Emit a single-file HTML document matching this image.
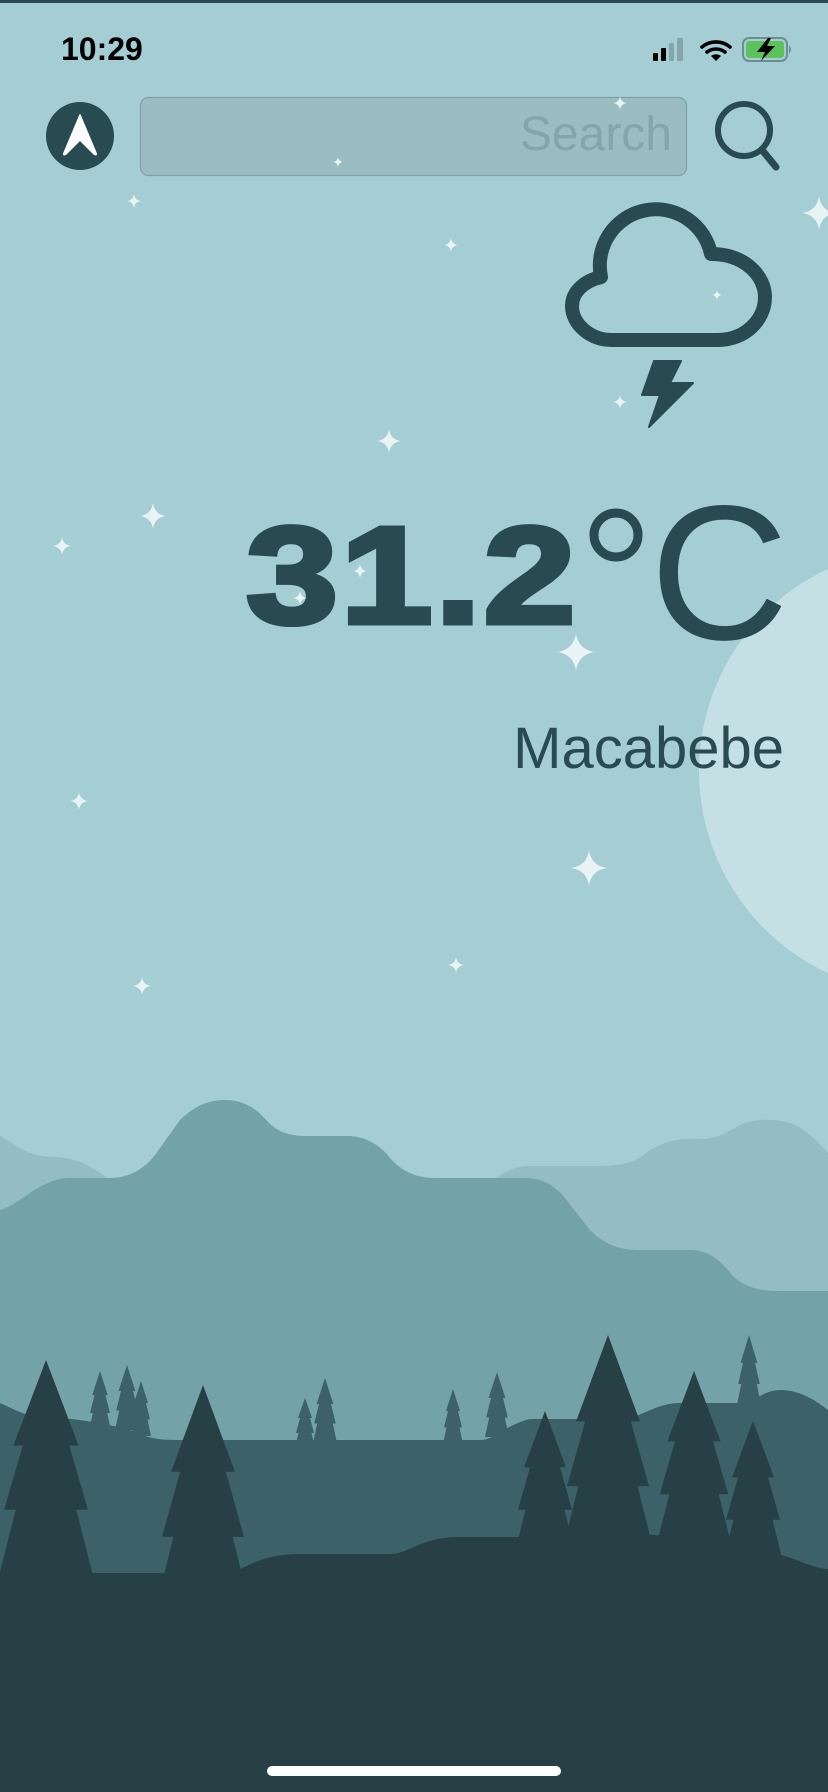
<!DOCTYPE html>
<html><head><meta charset="utf-8"><style>
html,body{margin:0;padding:0}
body{width:828px;height:1792px;position:relative;overflow:hidden;background:#a5cdd4;font-family:"Liberation Sans",sans-serif}
svg{position:absolute;left:0;top:0}
.t{position:absolute;white-space:nowrap;line-height:1}
</style></head><body>
<svg width="828" height="1792" viewBox="0 0 828 1792">
<rect x="0" y="0" width="828" height="3" fill="#2c4c54"/>
<circle cx="922" cy="771" r="223" fill="#c4e0e5"/>
<g fill="#e8f3f4">
<path transform="translate(589,868) scale(1.8)" d="M0,-10 Q1.2,-1.2 10,0 Q1.2,1.2 0,10 Q-1.2,1.2 -10,0 Q-1.2,-1.2 0,-10Z"/>
<path transform="translate(819,213) scale(1.7)" d="M0,-10 Q1.2,-1.2 10,0 Q1.2,1.2 0,10 Q-1.2,1.2 -10,0 Q-1.2,-1.2 0,-10Z"/>
<path transform="translate(153,516) scale(1.3)" d="M0,-10 Q1.2,-1.2 10,0 Q1.2,1.2 0,10 Q-1.2,1.2 -10,0 Q-1.2,-1.2 0,-10Z"/>
<path transform="translate(389,441) scale(1.2)" d="M0,-10 Q1.2,-1.2 10,0 Q1.2,1.2 0,10 Q-1.2,1.2 -10,0 Q-1.2,-1.2 0,-10Z"/>
<path transform="translate(62,546) scale(0.9)" d="M0,-10 Q1.2,-1.2 10,0 Q1.2,1.2 0,10 Q-1.2,1.2 -10,0 Q-1.2,-1.2 0,-10Z"/>
<path transform="translate(79,801) scale(0.9)" d="M0,-10 Q1.2,-1.2 10,0 Q1.2,1.2 0,10 Q-1.2,1.2 -10,0 Q-1.2,-1.2 0,-10Z"/>
<path transform="translate(142,986) scale(0.9)" d="M0,-10 Q1.2,-1.2 10,0 Q1.2,1.2 0,10 Q-1.2,1.2 -10,0 Q-1.2,-1.2 0,-10Z"/>
<path transform="translate(456,965) scale(0.8)" d="M0,-10 Q1.2,-1.2 10,0 Q1.2,1.2 0,10 Q-1.2,1.2 -10,0 Q-1.2,-1.2 0,-10Z"/>
<path transform="translate(134,201) scale(0.7)" d="M0,-10 Q1.2,-1.2 10,0 Q1.2,1.2 0,10 Q-1.2,1.2 -10,0 Q-1.2,-1.2 0,-10Z"/>
<path transform="translate(451,245) scale(0.7)" d="M0,-10 Q1.2,-1.2 10,0 Q1.2,1.2 0,10 Q-1.2,1.2 -10,0 Q-1.2,-1.2 0,-10Z"/>
</g>
<g fill="#93bdc3">
<path d="M0,1135 C20,1150 35,1157 53,1157 C75,1157 90,1165 110,1180 L110,1300 L0,1300Z"/>
<path d="M490,1185 C500,1172 515,1166 530,1166 L600,1166 C625,1166 640,1160 650,1150 C665,1142 675,1139 690,1139 L700,1139 C720,1139 730,1130 740,1125 C755,1118 780,1118 795,1125 C810,1132 820,1145 828,1153 L828,1300 L490,1300Z"/>
</g>
<path fill="#73a3a9" d="M0,1210 C20,1205 40,1178 70,1178 L110,1178 C130,1178 145,1168 155,1155 L180,1120 C195,1105 210,1100 225,1100 C245,1100 258,1110 268,1122 C278,1132 290,1136 306,1136 L348,1136 C365,1136 380,1145 390,1158 C402,1172 418,1178 435,1178 L525,1178 C545,1178 558,1188 568,1202 L590,1230 C605,1245 620,1250 640,1250 L690,1250 C710,1250 722,1262 732,1275 C745,1288 760,1291 781,1291 L828,1291 L828,1792 L0,1792Z"/>
<g fill="#3c6168">
<path transform="translate(100,1371) scale(0.55,0.6)" d="M0,0 L14,40 L10,40 L18,70 L13,70 L20,100 L-20,100 L-13,70 L-18,70 L-10,40 L-14,40Z"/>
<path transform="translate(127,1365) scale(0.6,0.65)" d="M0,0 L14,40 L10,40 L18,70 L13,70 L20,100 L-20,100 L-13,70 L-18,70 L-10,40 L-14,40Z"/>
<path transform="translate(141,1381) scale(0.5,0.55)" d="M0,0 L14,40 L10,40 L18,70 L13,70 L20,100 L-20,100 L-13,70 L-18,70 L-10,40 L-14,40Z"/>
<path transform="translate(305,1398) scale(0.5,0.5)" d="M0,0 L14,40 L10,40 L18,70 L13,70 L20,100 L-20,100 L-13,70 L-18,70 L-10,40 L-14,40Z"/>
<path transform="translate(325,1378) scale(0.6,0.65)" d="M0,0 L14,40 L10,40 L18,70 L13,70 L20,100 L-20,100 L-13,70 L-18,70 L-10,40 L-14,40Z"/>
<path transform="translate(453,1389) scale(0.5,0.55)" d="M0,0 L14,40 L10,40 L18,70 L13,70 L20,100 L-20,100 L-13,70 L-18,70 L-10,40 L-14,40Z"/>
<path transform="translate(497,1372) scale(0.6,0.65)" d="M0,0 L14,40 L10,40 L18,70 L13,70 L20,100 L-20,100 L-13,70 L-18,70 L-10,40 L-14,40Z"/>
<path transform="translate(749,1335) scale(0.6,0.7)" d="M0,0 L14,40 L10,40 L18,70 L13,70 L20,100 L-20,100 L-13,70 L-18,70 L-10,40 L-14,40Z"/>
<path d="M0,1403 C20,1412 30,1418 50,1418 C80,1418 110,1425 130,1430 C145,1438 160,1440 175,1440 L480,1440 C495,1440 505,1425 530,1419 L620,1419 C640,1419 655,1403 680,1403 L750,1403 C760,1395 770,1390 780,1390 C800,1390 815,1400 828,1410 L828,1792 L0,1792Z"/>
</g>
<g fill="#274046">
<path transform="translate(46,1360) scale(2.33,2.14)" d="M0,0 L14,40 L10,40 L18,70 L13,70 L20,100 L-20,100 L-13,70 L-18,70 L-10,40 L-14,40Z"/>
<path transform="translate(203,1385) scale(2.28,2.17)" d="M0,0 L14,40 L10,40 L18,70 L13,70 L20,100 L-20,100 L-13,70 L-18,70 L-10,40 L-14,40Z"/>
<path transform="translate(545,1411) scale(1.5,1.41)" d="M0,0 L14,40 L10,40 L18,70 L13,70 L20,100 L-20,100 L-13,70 L-18,70 L-10,40 L-14,40Z"/>
<path transform="translate(608,1335) scale(2.28,2.16)" d="M0,0 L14,40 L10,40 L18,70 L13,70 L20,100 L-20,100 L-13,70 L-18,70 L-10,40 L-14,40Z"/>
<path transform="translate(694,1371) scale(1.9,1.76)" d="M0,0 L14,40 L10,40 L18,70 L13,70 L20,100 L-20,100 L-13,70 L-18,70 L-10,40 L-14,40Z"/>
<path transform="translate(753,1421) scale(1.5,1.41)" d="M0,0 L14,40 L10,40 L18,70 L13,70 L20,100 L-20,100 L-13,70 L-18,70 L-10,40 L-14,40Z"/>
<path d="M0,1573 L232,1573 C250,1565 265,1554 300,1554 L390,1554 C410,1554 420,1537 460,1537 L520,1537 C540,1537 560,1525 590,1528 L700,1540 C730,1545 760,1553 781,1555 C800,1560 815,1569 828,1569 L828,1792 L0,1792Z"/>
</g>
<rect x="267" y="1766" width="294" height="10" rx="5" fill="#fff"/>
<g fill="#000">
<rect x="653" y="53" width="5" height="8" rx="1"/>
<rect x="661" y="48" width="5" height="13" rx="1"/>
</g>
<g fill="#86a5a9">
<rect x="669" y="43" width="5" height="18" rx="1"/>
<rect x="677" y="38" width="6" height="23" rx="1"/>
</g>
<g fill="none" stroke="#000" stroke-width="3.6" stroke-linecap="round">
<path d="M702,47 A22,22 0 0 1 730,47"/>
<path d="M707,52 A15,15 0 0 1 725,52"/>
</g>
<path d="M711,56 A8,8 0 0 1 721,56 L716,61Z" fill="#000"/>
<rect x="743" y="38" width="44" height="23" rx="6" fill="none" stroke="#6f8d91" stroke-width="2"/>
<rect x="746" y="41" width="38" height="17" rx="3.5" fill="#5cc35c"/>
<path d="M789,45 Q793,49.5 789,54Z" fill="#6f8d91"/>
<path d="M768,38 L757,52 L765,52 L761,61 L775,46 L767,46 L771,38Z" fill="#000"/>
<circle cx="80" cy="136" r="34" fill="#284a51"/>
<path d="M80,115 L96,153 Q97,156 94,154 L80,140 L66,154 Q63,156 64,153Z" fill="#fff" stroke="#fff" stroke-width="1.5" stroke-linejoin="round"/>
<rect x="140.5" y="97.5" width="546" height="78" rx="8" fill="#9bbcc1" stroke="#7fa1a6" stroke-width="1.2"/>
<g fill="#e8f3f4">
<path transform="translate(620,103) scale(0.7)" d="M0,-10 Q1.2,-1.2 10,0 Q1.2,1.2 0,10 Q-1.2,1.2 -10,0 Q-1.2,-1.2 0,-10Z"/>
<path transform="translate(338,162) scale(0.5)" d="M0,-10 Q1.2,-1.2 10,0 Q1.2,1.2 0,10 Q-1.2,1.2 -10,0 Q-1.2,-1.2 0,-10Z"/>
</g>
<circle cx="744" cy="130" r="26" fill="none" stroke="#2a4a52" stroke-width="6"/>
<line x1="762" y1="150" x2="776" y2="167" stroke="#2a4a52" stroke-width="7" stroke-linecap="round"/>
<path d="M612,340 C590,340 572,324 572,306 C572,292 584,281 601,277 A56,56 0 0 1 711,254 C745,254 765,276 765,297 C765,320 745,340 718,340 Z" fill="none" stroke="#2a4a52" stroke-width="14" stroke-linejoin="round"/>
<polygon points="654,361 681,361 670,383 693,383 649,427 660,395 642,395" fill="#2a4a52" stroke="#2a4a52" stroke-width="2" stroke-linejoin="round"/>
<g fill="#e8f3f4">
<path transform="translate(717,295) scale(0.5)" d="M0,-10 Q1.2,-1.2 10,0 Q1.2,1.2 0,10 Q-1.2,1.2 -10,0 Q-1.2,-1.2 0,-10Z"/>
<path transform="translate(620,402) scale(0.7)" d="M0,-10 Q1.2,-1.2 10,0 Q1.2,1.2 0,10 Q-1.2,1.2 -10,0 Q-1.2,-1.2 0,-10Z"/>
</g>
<circle cx="616" cy="535" r="22" fill="none" stroke="#2a4a52" stroke-width="9"/>
</svg>
<div class="t" style="left:61px;top:33px;font-size:32px;font-weight:bold;color:#000">10:29</div>
<div class="t" style="right:156px;top:111px;font-size:48px;color:#84a5aa">Search</div>
<div class="t" style="left:246px;top:507px;font-size:138px;font-weight:bold;color:#2a4a52;-webkit-text-stroke:5px #2a4a52;letter-spacing:2px;transform:scaleX(1.2);transform-origin:0 0">31.2</div>
<div class="t" style="left:650px;top:477px;font-size:192px;color:#2a4a52">C</div>
<div class="t" style="right:44px;top:720px;font-size:58px;color:#2a4a52">Macabebe</div>
<svg width="828" height="1792" viewBox="0 0 828 1792" style="pointer-events:none">
<g fill="#e8f3f4">
<path transform="translate(576,652) scale(1.9)" d="M0,-10 Q1.2,-1.2 10,0 Q1.2,1.2 0,10 Q-1.2,1.2 -10,0 Q-1.2,-1.2 0,-10Z"/>
<path transform="translate(360,571) scale(0.7)" d="M0,-10 Q1.2,-1.2 10,0 Q1.2,1.2 0,10 Q-1.2,1.2 -10,0 Q-1.2,-1.2 0,-10Z"/>
<path transform="translate(300,598) scale(0.7)" d="M0,-10 Q1.2,-1.2 10,0 Q1.2,1.2 0,10 Q-1.2,1.2 -10,0 Q-1.2,-1.2 0,-10Z"/>
</g>
</svg>
</body></html>
